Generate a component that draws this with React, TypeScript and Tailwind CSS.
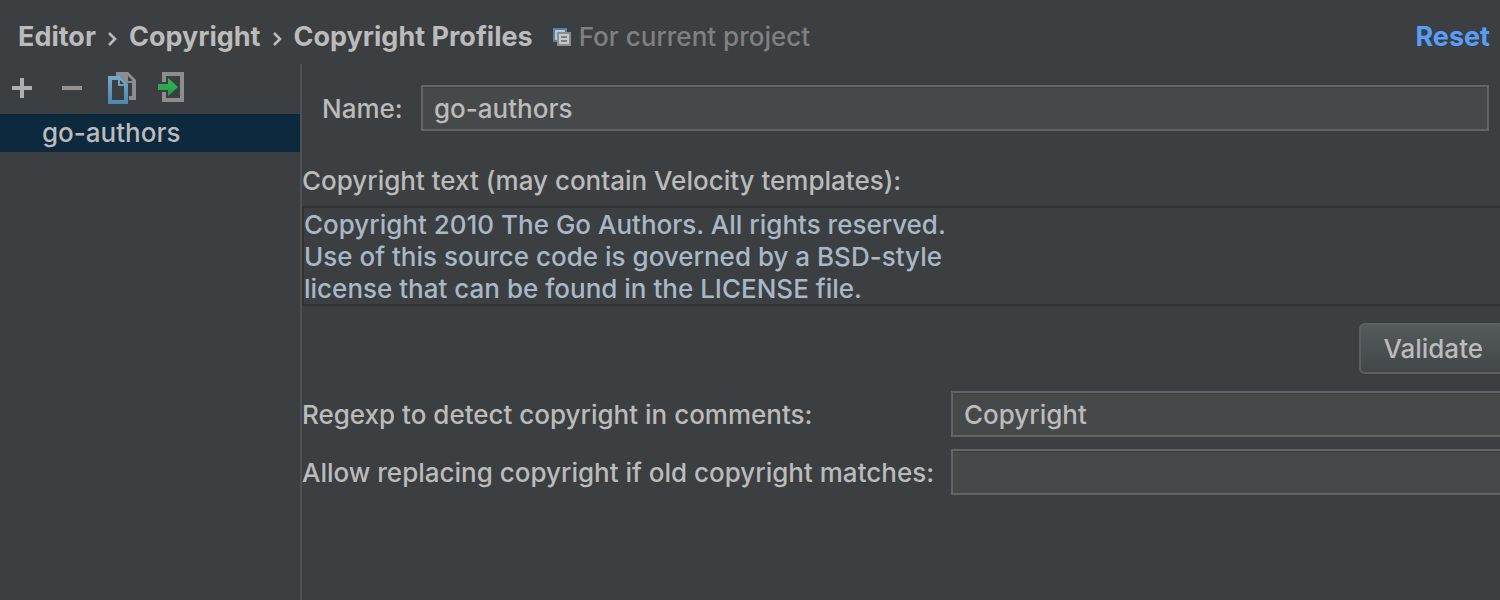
import React, { FC, useState } from 'react'

const fieldClass =
  'h-[46px] min-w-0 flex-1 border-2 border-[#646464] bg-[#45494a] px-[11px] text-[#bbbbbb] shadow-[inset_0_1px_0_#3d4041] outline-none'

const App: FC = () => {
  return (
    <div className="flex min-h-screen flex-col overflow-hidden bg-[#3c3f41] font-['Inter','Noto_Sans',sans-serif] text-[26px] leading-8 font-medium text-[#bbbbbb]">
      <Header />
      <div className="flex flex-1">
        <Sidebar />
        <ProfileForm />
      </div>
    </div>
  )
}

export default App

const Header: FC = () => {
  return (
    <header className="flex h-16 items-center justify-between pt-[10px] pr-[10px] pl-[18px] whitespace-nowrap">
      <div className="flex items-center">
        <nav className="flex items-center gap-[11px] text-[27px] font-bold">
          <a href="#editor">Editor</a>
          <Chevron />
          <a href="#copyright">Copyright</a>
          <Chevron />
          <span>Copyright Profiles</span>
        </nav>
        <ProjectIcon />
        <span className="ml-2 text-[#808080]">For current project</span>
      </div>
      <a href="#reset" className="text-[27px] font-bold text-[#589df6]">
        Reset
      </a>
    </header>
  )
}

const Sidebar: FC = () => {
  return (
    <aside className="w-[302px] shrink-0 border-r-2 border-[#515151]">
      <div className="flex h-[50px] items-center gap-[14px] pb-[2px] pl-1">
        <button aria-label="Add" className="h-9 w-9">
          <svg viewBox="0 0 36 36" className="h-9 w-9">
            <path
              d="M16 8h4v8h8v4h-8v8h-4v-8H8v-4h8z"
              fill="#afafaf"
            />
          </svg>
        </button>
        <button aria-label="Remove" className="h-9 w-9">
          <svg viewBox="0 0 36 36" className="h-9 w-9">
            <path d="M8 16h20v4H8z" fill="#939393" />
          </svg>
        </button>
        <button aria-label="Copy" className="h-9 w-9">
          <CopyIcon />
        </button>
        <button aria-label="Import" className="h-9 w-9">
          <ImportIcon />
        </button>
      </div>
      <ul>
        <li>
          <button className="h-[38px] w-full bg-[#0d293e] pl-[42px] text-left">
            go-authors
          </button>
        </li>
      </ul>
    </aside>
  )
}

const ProfileForm: FC = () => {
  const [name, setName] = useState('go-authors')
  const [text, setText] = useState(
    'Copyright 2010 The Go Authors. All rights reserved.\nUse of this source code is governed by a BSD-style\nlicense that can be found in the LICENSE file.'
  )
  const [regexp, setRegexp] = useState('Copyright')
  const [replace, setReplace] = useState('')

  return (
    <main className="flex min-w-0 flex-1 flex-col pt-[21px]">
      <div className="flex items-center pr-[11px] pl-5">
        <label htmlFor="name" className="w-[99px] pt-[2px]">
          Name:
        </label>
        <input
          id="name"
          className={fieldClass}
          value={name}
          onChange={(e) => setName(e.target.value)}
        />
      </div>
      <label htmlFor="text" className="mt-[34px]">
        Copyright text (may contain Velocity templates):
      </label>
      <textarea
        id="text"
        rows={3}
        spellCheck={false}
        className="mt-[9px] block h-[100px] resize-none overflow-hidden border-2 border-r-0 border-[#323232] bg-transparent pt-px text-[#a9b7c6] outline-none"
        value={text}
        onChange={(e) => setText(e.target.value)}
      />
      <button className="mt-[17px] h-[51px] self-end rounded-l-md border-2 border-r-0 border-[#5e6060] bg-linear-to-b from-[#555a5c] to-[#414648] pr-[17px] pl-[22px]">
        Validate
      </button>
      <div className="mt-[17px] flex items-center">
        <label htmlFor="regexp" className="w-[649px] pt-[2px]">
          Regexp to detect copyright in comments:
        </label>
        <input
          id="regexp"
          className={`${fieldClass} border-r-0`}
          value={regexp}
          onChange={(e) => setRegexp(e.target.value)}
        />
      </div>
      <div className="mt-3 flex items-center">
        <label htmlFor="replace" className="w-[649px] pt-[2px]">
          Allow replacing copyright if old copyright matches:
        </label>
        <input
          id="replace"
          className={`${fieldClass} border-r-0`}
          value={replace}
          onChange={(e) => setReplace(e.target.value)}
        />
      </div>
    </main>
  )
}

const Chevron: FC = () => {
  return (
    <svg viewBox="0 0 11 16" className="mt-1 h-4 w-[11px]">
      <path
        d="M2 2l6 6-6 6"
        fill="none"
        stroke="#bbbbbb"
        strokeWidth="2.6"
      />
    </svg>
  )
}

const ProjectIcon: FC = () => {
  return (
    <svg viewBox="0 0 18 18" className="ml-5 h-[18px] w-[18px]">
      <path d="M0 0h14v4h-2V2H2v10h2v2H0z" fill="#4a88ab" />
      <path d="M2 2h10v2H4v8H2z" fill="#c3c6c8" />
      <path d="M4 4h14v14H4z" fill="#8c8c8c" />
      <path d="M6 6h10v10H6z" fill="#c6c8c9" />
      <path d="M8 8h6v2H8zM8 12h6v2H8z" fill="#7b7d7e" />
    </svg>
  )
}

const CopyIcon: FC = () => {
  return (
    <svg viewBox="0 1 36 36" className="h-9 w-9">
      <defs>
        <linearGradient id="sheet" x1="0" y1="0" x2="0" y2="1">
          <stop offset="0" stopColor="#76a9c8" />
          <stop offset="1" stopColor="#4b87ae" />
        </linearGradient>
      </defs>
      <path
        d="M12 3h12l8 8v20h-7v-4h3V14h-5l-7-7h-4zM24 7v5h4v-1z"
        fill="#8d8d8d"
        fillRule="evenodd"
      />
      <path
        fillRule="evenodd"
        d="M4 7h12l8 8v20H4zM8 11v20h12V17h-6v-6z"
        fill="url(#sheet)"
      />
      <path d="M16 11v4h4z" fill="#3c3f41" />
    </svg>
  )
}

const ImportIcon: FC = () => {
  return (
    <svg viewBox="0 1 36 36" className="h-9 w-9">
      <defs>
        <linearGradient id="arrow" x1="0" y1="0" x2="0" y2="1">
          <stop offset="0" stopColor="#34b659" />
          <stop offset="1" stopColor="#249c48" />
        </linearGradient>
      </defs>
      <path
        fillRule="evenodd"
        d="M8 3h22v30H8zM12 7v22h14V7z"
        fill="#8d8d8d"
      />
      <path d="M8 13h4v10H8z" fill="#3c3f41" />
      <path d="M4 15h10V9l10 9-10 9v-6H4z" fill="url(#arrow)" />
    </svg>
  )
}
